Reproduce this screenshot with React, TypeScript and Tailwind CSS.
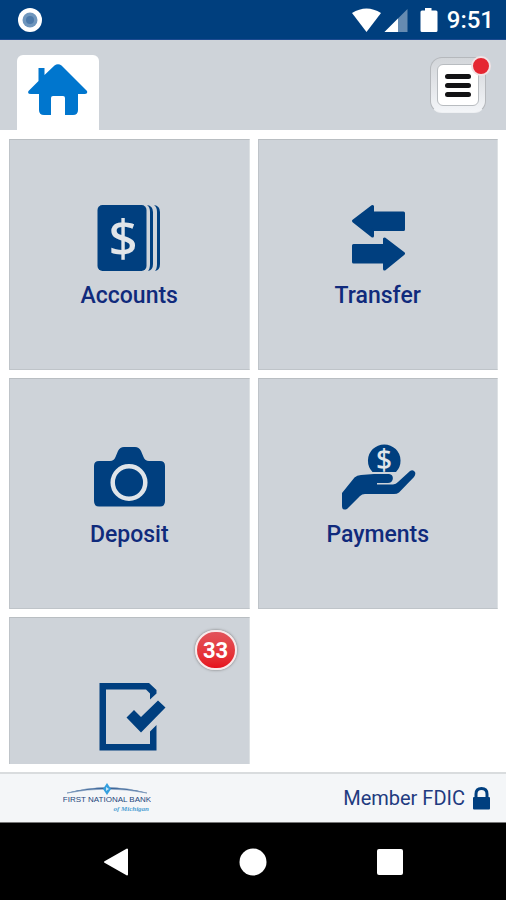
import type { ReactNode } from "react";

interface TileProps {
    label?: string;
    name: string;
    badge?: number;
    children: ReactNode;
}

function Tile({ label, name, badge, children }: TileProps) {
    return (
        <button
            type="button"
            aria-label={name}
            className="relative flex flex-col items-center border border-[#bfc4c9] border-t-[#b9bec2] border-r-[#dde1e4] bg-[#ced3d9] pt-[65px] text-[#003f7f]"
        >
            <svg viewBox="0 0 80 68" className="h-[68px] w-20 shrink-0 overflow-visible" fill="currentColor">
                {children}
            </svg>
            {label && (
                <span className="mt-2 text-[23px] leading-[30px] font-medium text-[#102a7c]">{label}</span>
            )}
            {badge !== undefined && (
                <span className="absolute top-3 right-3 flex h-10 w-[42px] items-center justify-center rounded-full border-2 border-[#f8e9ea] bg-linear-to-b from-[#e2525a] to-[#e60f1c] text-[22px] font-bold text-white shadow-[0_0_3px_#777]">
                    {badge}
                </span>
            )}
        </button>
    );
}

function StatusBar() {
    return (
        <div className="flex h-10 shrink-0 items-center justify-between border-b border-[#1d4b91] bg-[#003f7e] pr-3 pl-[18px] text-white">
            <svg viewBox="0 0 24 24" className="h-6 w-6">
                <circle cx="12" cy="12" r="12" fill="#fff" />
                <circle cx="12" cy="12" r="7.5" fill="#6f96bd" />
                <circle cx="12" cy="12" r="4" fill="#4c79a9" />
            </svg>
            <div className="flex items-center">
                <svg viewBox="0 0 88 26" className="h-[26px] w-[88px]" fill="#fff">
                    <path d="M1 6Q15.500-3 30 6L15.500 25Z" />
                    <path d="M56.500 2V25H33.500Z" opacity=".4" />
                    <path d="M47 11.500V25H33.500Z" />
                    <path d="M74 1h6.500v2.500H85q1.500 0 1.500 1.500v18.500q0 1.500-1.500 1.500H71q-1.500 0-1.500-1.500V5q0-1.500 1.500-1.500h3z" />
                </svg>
                <span className="ml-2 text-2xl font-medium">9:51</span>
            </div>
        </div>
    );
}

function Header() {
    return (
        <header className="flex h-[90px] shrink-0 items-end justify-between bg-[#ced3d9] pr-5 pl-[17px]">
            <a
                href="#home"
                aria-label="Home"
                className="flex h-[75px] w-[82px] justify-center rounded-t-md bg-white pt-2"
            >
                <svg viewBox="0 0 60 54" className="h-[54px] w-[60px]" fill="#0076ce">
                    <path d="M26.500 2.500Q30 0 33.500 2.500L59 28q1 3-2 3h-7v16q0 5-5 5h-8V35q0-2-2-2H25q-2 0-2 2v17h-7q-5 0-5-5V31H3q-4 0-2.500-3L10.500 18V5h6v7z" />
                </svg>
            </a>
            <button
                type="button"
                aria-label="Menu"
                className="relative mb-[17px] h-[56px] w-[56px] rounded-xl border border-[#b5b8bc] border-b-[#eef0f3] bg-linear-to-b from-[#d3d6da] to-[#f3f5f8] p-[6px]"
            >
                <span className="flex h-full w-full flex-col items-center justify-center gap-1 rounded-md border border-[#b8bcc0] bg-white">
                    <span className="h-[5px] w-[26px] rounded-full bg-[#121214]" />
                    <span className="h-[5px] w-[26px] rounded-full bg-[#121214]" />
                    <span className="h-[5px] w-[26px] rounded-full bg-[#121214]" />
                </span>
                <span className="absolute -top-[2px] -right-[6px] h-5 w-5 rounded-full border-2 border-[#f1e3e5] bg-[#e52631]" />
            </button>
        </header>
    );
}

function BankLogo() {
    return (
        <svg viewBox="0 0 88 32" className="h-8 w-[88px]" role="img" aria-label="First National Bank of Michigan">
            <path d="M4 11Q44 0 84 11Q44 3 4 11Z" fill="#174a86" stroke="#7895b9" strokeWidth=".7" />
            <path d="M44 1l4 6-4 6-4-6z" fill="#35a0df" />
            <path d="M43 5l3 2-3 2z" fill="#c7e7f8" />
            <text x="44" y="20" textAnchor="middle" fontSize="8" fill="#24467c" fontFamily="Liberation Sans, sans-serif">
                FIRST NATIONAL BANK
            </text>
            <text x="86" y="29" textAnchor="end" fontSize="7" fontStyle="italic" fontWeight="bold" fill="#4b9fd3" fontFamily="Liberation Serif, serif">
                of Michigan
            </text>
        </svg>
    );
}

export default function App() {
    return (
        <div className="flex h-dvh flex-col bg-white font-['Roboto',sans-serif]">
            <StatusBar />
            <Header />
            <main className="min-h-0 flex-1 pt-[9px] pr-2 pb-2 pl-[9px]">
                <div className="grid h-full auto-rows-[231px] grid-cols-2 gap-2 overflow-hidden">
                    <Tile name="Accounts" label="Accounts">
                        <rect x="8.500" y="0" width="49" height="66" rx="5" />
                        <path d="M58 0q6 1 6 7v52q0 6-5 7q2-2 2-7V7q0-5-3-7z" />
                        <path d="M65 0q6 1 6 7v52q0 6-5 7q2-2 2-7V7q0-5-3-7z" />
                        <text x="34" y="51" textAnchor="middle" fontSize="51" fontWeight="500" fill="#e1e5e9" fontFamily="Noto Sans, sans-serif">
                            $
                        </text>
                    </Tile>
                    <Tile name="Transfer" label="Transfer">
                        <g stroke="currentColor" strokeWidth="3" strokeLinejoin="round">
                            <path d="M15.500 16L34.500 1.500V8H65.500V24.500H34.500V31z" />
                            <path d="M65.500 48.500L46.500 34V40.500H15.500V57H46.500V64z" />
                        </g>
                    </Tile>
                    <Tile name="Deposit" label="Deposit">
                        <path d="M10 17H21Q25 17 26.500 13L29 7Q31 3 35 3H46Q50 3 52 7L54.500 13Q56 17 60 17H71Q76 17 76 22V57Q76 62.500 71 62.500H10Q5 62.500 5 57V22Q5 17 10 17Z" />
                        <circle cx="40" cy="38.500" r="16.300" fill="none" stroke="#dfe4e9" strokeWidth="4.500" />
                    </Tile>
                    <Tile name="Payments" label="Payments">
                        <path d="M34.500 28A16.300 16.300 0 1 1 58 28Z" />
                        <text x="46" y="26" textAnchor="middle" fontSize="28" fontWeight="500" fill="#e1e5e9" fontFamily="Noto Sans, sans-serif">
                            $
                        </text>
                        <path d="M4 49L16.500 33.500Q19 31 23 31L36 30H51Q56 31 54.500 36Q53.500 39 50 39H39V40.500H55Q58 40 60 38L72 27Q75 25 77 28Q78 30 76 33L61 48.500Q59 50 56 50H27Q24 50 22 52L9 65Q4 67 4 62Z" />
                    </Tile>
                    <Tile name="Approvals" badge={33}>
                        <path d="M10.500 0H60L67.500 7V10.500L61 16.500V10.500L57 6.500H17V61H61V48.500L67.500 42V67.500H10.500Z" />
                        <path d="M37.500 34.500L45 27L52 34L69 17.500L76.500 24.500L52 49.500Z" />
                    </Tile>
                </div>
            </main>
            <footer className="flex h-[50px] shrink-0 items-center justify-between border-t-2 border-[#d9dcde] bg-[#f4f6f8] pr-4 pl-[63px]">
                <BankLogo />
                <div className="flex items-center gap-2 text-xl text-[#1f3b80]">
                    <span>Member FDIC</span>
                    <svg viewBox="0 0 17 23" className="h-[23px] w-[17px]">
                        <path d="M3 11V7q0-5.500 5.500-5.500T14 7v4" fill="none" stroke="#003f7f" strokeWidth="3" />
                        <rect x="0" y="10" width="17" height="12.500" rx="1" fill="#003f7f" />
                    </svg>
                </div>
            </footer>
            <nav className="flex h-[78px] shrink-0 items-center justify-center gap-[109px] border-t border-[#777] bg-black">
                <button type="button" aria-label="Back">
                    <svg viewBox="0 0 28 28" className="h-7 w-7">
                        <path d="M25 1.500V26.500L3 14Z" fill="#fff" stroke="#fff" strokeWidth="2" strokeLinejoin="round" />
                    </svg>
                </button>
                <button type="button" aria-label="Home screen">
                    <svg viewBox="0 0 28 28" className="h-7 w-7">
                        <circle cx="14" cy="14" r="13.500" fill="#fff" />
                    </svg>
                </button>
                <button type="button" aria-label="Recent apps">
                    <svg viewBox="0 0 28 28" className="h-7 w-7">
                        <rect x="1" y="1" width="26" height="26" rx="2" fill="#fff" />
                    </svg>
                </button>
            </nav>
        </div>
    );
}
